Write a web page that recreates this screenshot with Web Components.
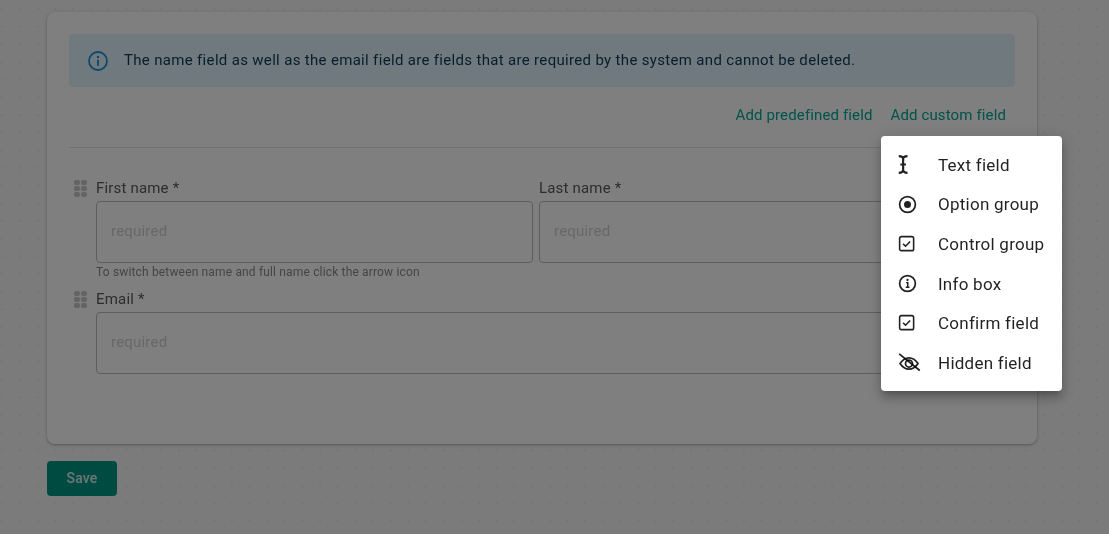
<!DOCTYPE html>
<html lang="en">
<head>
<meta charset="utf-8">
<title>Form fields</title>
<style>
  html, body { margin: 0; height: 100%; }
  body { font-family: Roboto, "Liberation Sans", sans-serif; overflow: hidden; }
</style>
</head>
<body>
<form-page>
  <form-card>
    <info-note>The name field as well as the email field are fields that are required by the system and cannot be deleted.</info-note>
    <card-actions>
      <a-link>Add predefined field</a-link>
      <a-link>Add custom field</a-link>
    </card-actions>
    <field-row>
      <text-input label="First name *" hint="To switch between name and full name click the arrow icon"></text-input>
      <text-input label="Last name *"></text-input>
    </field-row>
    <field-row>
      <text-input label="Email *"></text-input>
    </field-row>
  </form-card>
  <save-button>Save</save-button>
</form-page>
<page-scrim></page-scrim>
<add-menu>
  <menu-item icon="text">Text field</menu-item>
  <menu-item icon="radio">Option group</menu-item>
  <menu-item icon="check">Control group</menu-item>
  <menu-item icon="info">Info box</menu-item>
  <menu-item icon="check">Confirm field</menu-item>
  <menu-item icon="hidden">Hidden field</menu-item>
</add-menu>

<script>
const ICONS = {
  text: '<path d="M2 2.500c2.800 0 5 1 5 3.500v12c0 2.500-2.200 3.500-5 3.500M12 2.500C9.200 2.500 7 3.500 7 6v12c0 2.500 2.200 3.500 5 3.500M3.800 12h6.400" fill="none" stroke="currentColor" stroke-width="2.500"/>',
  radio: '<circle cx="12" cy="12" r="9" fill="none" stroke="currentColor" stroke-width="2"/><circle cx="12" cy="12" r="4" fill="currentColor"/>',
  check: '<rect x="3" y="3" width="16" height="16" rx="2" fill="none" stroke="currentColor" stroke-width="1.800"/><path d="M7 11.300l2.800 2.700L15 8.500" fill="none" stroke="currentColor" stroke-width="1.800"/>',
  info: '<circle cx="12" cy="12" r="9" fill="none" stroke="currentColor" stroke-width="2"/><circle cx="12" cy="8" r="1.300" fill="currentColor"/><path d="M10.300 11h2v5M10 16.200h4.200" fill="none" stroke="currentColor" stroke-width="1.700"/>',
  hidden: '<path d="M3.500 12C6.500 7.500 9.800 5.500 13.700 5.500S21 7.500 24 12c-3 4.500-6.400 6.500-10.300 6.500S6.500 16.500 3.500 12z" fill="none" stroke="currentColor" stroke-width="2"/><circle cx="13.700" cy="12" r="4" fill="none" stroke="currentColor" stroke-width="2"/><path d="M2.500 1l23.500 19" fill="none" stroke="currentColor" stroke-width="2"/>'
};

// small helper so every element below stays a few lines
function define(name, html) {
  customElements.define(name, class extends HTMLElement {
    constructor() {
      super();
      this.attachShadow({ mode: 'open' }).innerHTML = html;
    }
  });
}

define('form-page', `
  <style>
    :host {
      display: block;
      box-sizing: border-box;
      height: 534px;
      padding: 12px 72px 0 47px;
      background-color: #f6f6f6;
      background-image: radial-gradient(circle, #ebebeb 1.1px, transparent 1.6px);
      background-size: 17.67px 17.67px;
      background-position: -6.5px 0.2px;
    }
  </style>
  <slot></slot>
`);

define('form-card', `
  <style>
    :host {
      display: block;
      box-sizing: border-box;
      height: 432px;
      padding: 22px;
      background: #fff;
      border-radius: 8px;
      box-shadow: 0 1px 3px rgba(0,0,0,.3);
      will-change: transform;
    }
  </style>
  <slot></slot>
`);

define('info-note', `
  <style>
    :host {
      display: flex;
      align-items: center;
      gap: 16px;
      box-sizing: border-box;
      height: 53px;
      padding: 0 19px;
      background: #e1f3fd;
      border-radius: 4px;
      color: #0c3a57;
      font-size: 15px;
      letter-spacing: .325px;
    }
    svg { width: 20px; height: 20px; flex: none; margin-top: 1px; color: #1c90d8; }
    span { margin-top: -2px; }
  </style>
  <svg viewBox="0 0 20 20" aria-hidden="true">
    <circle cx="10" cy="10" r="9" fill="none" stroke="currentColor" stroke-width="1.800"/>
    <circle cx="10" cy="5.900" r="1.200" fill="currentColor"/>
    <path d="M10 8.800v6" fill="none" stroke="currentColor" stroke-width="1.900"/>
  </svg>
  <span><slot></slot></span>
`);

define('card-actions', `
  <style>
    :host {
      display: flex;
      justify-content: flex-end;
      gap: 18px;
      box-sizing: border-box;
      height: 61px;
      padding: 18px 9px 0 0;
      margin-bottom: 30px;
      border-bottom: 1px solid #e4e4e4;
    }
  </style>
  <slot></slot>
`);

define('a-link', `
  <style>
    :host { display: block; color: #00a896; font-size: 15px; line-height: 20px; letter-spacing: .13px; }
  </style>
  <slot></slot>
`);

define('field-row', `
  <style>
    :host {
      display: flex;
      gap: 6px;
      width: 907px;
      padding-left: 27px;
      box-sizing: border-box;
      position: relative;
    }
    .grip {
      position: absolute;
      left: 5px;
      top: 2px;
      display: grid;
      grid-template-columns: 6px 6px;
      grid-auto-rows: 5px;
      gap: 1px;
    }
    .grip i { background: #c8c8c8; border-radius: 2px; }
  </style>
  <div class="grip"><i></i><i></i><i></i><i></i><i></i><i></i></div>
  <slot></slot>
`);

class TextInput extends HTMLElement {
  constructor() {
    super();
    this.attachShadow({ mode: 'open' }).innerHTML = `
      <style>
        :host { display: block; flex: 1; min-width: 0; }
        .label { font-size: 15px; line-height: 20px; letter-spacing: .18px; color: #5a5a5a; margin-bottom: 3px; height: 20px; }
        .box {
          box-sizing: border-box;
          height: 62px;
          padding: 0 14px 2px;
          display: flex;
          align-items: center;
          border: 1px solid #bbb;
          border-radius: 4px;
          color: #cfcfcf;
          font-size: 15px;
          letter-spacing: .2px;
        }
        .hint { height: 17px; padding: 1px 0 8px; font-size: 12px; line-height: 16px; letter-spacing: .16px; color: #8a8a8a; }
      </style>
      <div class="label"></div>
      <div class="box">required</div>
      <div class="hint"></div>
    `;
  }
  connectedCallback() {
    this.shadowRoot.querySelector('.label').textContent = this.getAttribute('label');
    this.shadowRoot.querySelector('.hint').textContent = this.getAttribute('hint') || '';
  }
}
customElements.define('text-input', TextInput);

define('save-button', `
  <style>
    :host {
      display: flex;
      align-items: center;
      justify-content: center;
      width: 70px;
      height: 35px;
      margin-top: 17px;
      border-radius: 4px;
      background: #009683;
      color: rgba(255,255,255,.85);
      font-size: 14px;
      font-weight: 500;
      letter-spacing: .2px;
      will-change: transform;
    }
    span { margin-top: -2px; }
  </style>
  <span><slot></slot></span>
`);

define('page-scrim', `
  <style>
    :host { position: fixed; inset: 0; background: rgba(0,0,0,.5); }
  </style>
`);

define('add-menu', `
  <style>
    :host {
      position: fixed;
      left: 881px;
      top: 136px;
      width: 181px;
      height: 255px;
      box-sizing: border-box;
      padding: 9px 0;
      background: #fff;
      border-radius: 4px;
      box-shadow: 0 5px 5px -3px rgba(0,0,0,.2), 0 8px 10px 1px rgba(0,0,0,.14), 0 3px 14px 2px rgba(0,0,0,.12);
      will-change: transform;
    }
  </style>
  <slot></slot>
`);

class MenuItem extends HTMLElement {
  constructor() {
    super();
    this.attachShadow({ mode: 'open' }).innerHTML = `
      <style>
        :host {
          display: flex;
          align-items: center;
          gap: 20px;
          height: 39.67px;
          padding-left: 16px;
          color: rgba(0,0,0,.87);
          font-size: 17px;
          letter-spacing: .25px;
        }
        svg { width: 21px; height: 21px; flex: none; overflow: visible; }
      </style>
      <svg viewBox="0 0 24 24" aria-hidden="true"></svg>
      <span><slot></slot></span>
    `;
  }
  connectedCallback() {
    this.shadowRoot.querySelector('svg').innerHTML = ICONS[this.getAttribute('icon')];
  }
}
customElements.define('menu-item', MenuItem);
</script>
</body>
</html>
